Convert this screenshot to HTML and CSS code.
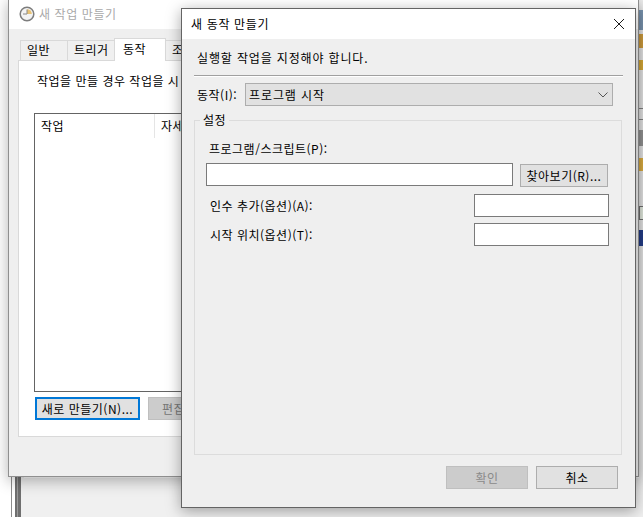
FILE: index.html
```html
<!DOCTYPE html>
<html lang="ko">
<head>
<meta charset="utf-8">
<title>새 동작 만들기</title>
<link rel="stylesheet" href="styles.css">
</head>
<body>
<div class="desktop">
  <div class="bg-left"></div>
  <div class="bg-right">
    <div class="strip-blue"></div>
    <div class="strip-ico strip-a"></div>
    <div class="strip-ico strip-b"></div>
    <div class="strip-line strip-c"></div>
    <div class="strip-coil"></div>
    <div class="strip-ico strip-d"></div>
    <div class="strip-box"></div>
    <div class="strip-navy"></div>
  </div>
  <div class="bg-window"></div>

  <section class="window back">
    <header class="titlebar back-title">
      <svg class="clock" width="16" height="16" viewBox="0 0 16 16" aria-hidden="true">
        <circle cx="8" cy="8" r="6.8" fill="#f3f3f3" stroke="#7d7d7d" stroke-width="1.5"/>
        <path d="M8 3.2V8H12.8A4.8 4.8 0 0 0 8 3.2Z" fill="#e8c274"/>
        <path d="M8 3.5V8H4" fill="none" stroke="#8a8a8a" stroke-width="1"/>
      </svg>
      <span class="back-name">새 작업 만들기</span>
    </header>
    <div class="back-body">
      <nav class="tabs">
        <span class="tab tab-general">일반</span>
        <span class="tab tab-trigger">트리거</span>
        <span class="tab tab-active">동작</span>
        <span class="tab tab-cond">조</span>
      </nav>
      <div class="panel">
        <p class="panel-text">작업을 만들 경우 작업을 시</p>
        <div class="listbox">
          <div class="list-head">
            <span class="col col-action">작업</span>
            <span class="col col-detail">자세</span>
          </div>
        </div>
        <div class="panel-actions">
          <button class="btn btn-new">새로 만들기(N)...</button>
          <button class="btn btn-edit">편집</button>
        </div>
      </div>
    </div>
  </section>

  <section class="window dialog">
    <header class="titlebar dialog-title">
      <span>새 동작 만들기</span>
      <svg class="close" width="10" height="10" viewBox="0 0 10 10" aria-hidden="true">
        <path d="M0 0L10 10M10 0L0 10" stroke="#1a1a1a" stroke-width="1" fill="none"/>
      </svg>
    </header>
    <div class="dialog-body">
      <p class="intro">실행할 작업을 지정해야 합니다.</p>
      <div class="rule"></div>
      <div class="action-row">
        <span class="action-label">동작(I):</span>
        <div class="select">
          <span>프로그램 시작</span>
          <svg width="10" height="6" viewBox="0 0 10 6" aria-hidden="true">
            <path d="M0.5 0.5L5 5L9.500 0.5" stroke="#555" stroke-width="1" fill="none"/>
          </svg>
        </div>
      </div>
      <div class="group">
        <span class="legend">설정</span>
        <label class="prog-label">프로그램/스크립트(P):</label>
        <div class="prog-row">
          <div class="input prog-input"></div>
          <button class="btn btn-browse">찾아보기(R)...</button>
        </div>
        <div class="opt-row opt-args">
          <label>인수 추가(옵션)(A):</label>
          <div class="input opt-input"></div>
        </div>
        <div class="opt-row opt-start">
          <label>시작 위치(옵션)(T):</label>
          <div class="input opt-input"></div>
        </div>
      </div>
      <div class="dialog-actions">
        <button class="btn btn-ok">확인</button>
        <button class="btn btn-cancel">취소</button>
      </div>
    </div>
  </section>
</div>
</body>
</html>
```
FILE: styles.css
```css
* { box-sizing: border-box; }
html, body { margin: 0; padding: 0; }
body {
  width: 643px;
  height: 517px;
  overflow: hidden;
  background: #fff;
  font-family: "Noto Sans CJK KR", "Open Sans", sans-serif;
  font-size: 12px;
  letter-spacing: .5px;
  color: #000;
}
.desktop { position: relative; width: 643px; height: 517px; overflow: hidden; }
p { margin: 0; }
button { font: inherit; letter-spacing: inherit; padding: 0; margin: 0; }
span, label { line-height: 16px; }

/* backdrop */
.bg-left {
  position: absolute; left: 0; top: 0; width: 24px; height: 517px;
  background: linear-gradient(90deg, #fff 0 11px, #8c8c8c 11px 12px, #fff 12px 15px, #6f6f6f 15px 17px, #9a9a9a 17px 18px, #6f6f6f 18px 21px, #f0f0f0 21px);
}
.bg-window {
  position: absolute; left: 21px; top: 478px; width: 622px; height: 39px; background: #f0f0f0;
}
.bg-right {
  position: absolute; left: 639px; top: 0; width: 4px; height: 517px; background: #f0f0f0;
}
.bg-right > div { position: absolute; left: 0; width: 4px; }
.strip-blue { top: 10px; height: 20px; background: #7f9bb8; }
.strip-a { top: 34px; height: 14px; background: #d9a441; }
.strip-b { top: 60px; height: 10px; background: #e2b23a; }
.strip-line { top: 108px; height: 12px; border-top: 1px solid #888; border-bottom: 1px solid #888; }
.strip-coil { top: 130px; height: 16px; background: #9a9a9a; }
.strip-d { top: 158px; height: 13px; background: #e6b545; }
.strip-box { top: 206px; height: 14px; border: 1px solid #777; border-right: 0; background: #eef5ea; }
.strip-navy { top: 230px; height: 16px; background: #26408f; }

/* windows */
.window { position: absolute; background: #efefef; }
.titlebar { background: #fff; display: flex; align-items: center; }

.back {
  left: 8px; top: -2px; width: 631px; height: 479px;
  border: 1px solid #8f8f8f;
  box-shadow: 0 4px 14px rgba(0, 0, 0, .3);
}
.back-title { height: 30px; padding-left: 10px; gap: 4px; }
.clock { flex: none; }
.back-name { color: #a9a9a9; letter-spacing: .6px; }
.back-body { padding: 9px 0 0 9px; }
.tabs { display: flex; height: 22px; align-items: flex-end; padding-left: 2px; position: relative; }
.tab {
  height: 20px; background: #f0f0f0; border: 1px solid #d9d9d9; border-bottom: 0;
  padding: 1px 0 0 6px; margin-left: -1px;
}
.tab-general { width: 48px; margin-left: 0; }
.tab-trigger { width: 48px; }
.tab-active {
  width: 52px; height: 23px; background: #fff; margin-bottom: -1px; padding: 2px 0 0 8px;
  position: relative;
}
.tab-cond { width: 60px; }
.panel {
  width: 606px; height: 377px; background: #fff; border: 1px solid #d9d9d9;
  padding: 12px 0 0 15px; white-space: nowrap;
}
.panel-text { line-height: 16px; padding-left: 3px; }
.listbox { width: 560px; height: 279px; margin-top: 24px; border: 1px solid #646464; background: #fff; }
.list-head { display: flex; height: 24px; }
.col { padding: 4px 0 0 6px; height: 24px; }
.col-action { width: 120px; border-right: 1px solid #e5e5e5; }
.panel-actions { display: flex; gap: 8px; margin-top: 5px; padding-left: 1px; }
.btn { height: 23px; background: #e1e1e1; border: 1px solid #adadad; color: #000; line-height: 16px; white-space: nowrap; }
.btn-new { width: 105px; border: 2px solid #0078d7; }
.btn-edit { width: 100px; background: #cccccc; border-color: #bfbfbf; color: #777; text-align: left; padding-left: 13px; }

.dialog {
  left: 181px; top: 8px; width: 455px; height: 500px;
  border: 1px solid #646464;
  box-shadow: 0 3px 14px rgba(0, 0, 0, .35);
}
.dialog-title { height: 30px; padding: 0 11px 0 9px; justify-content: space-between; letter-spacing: .65px; }
.dialog-body { padding: 0 13px 0 12px; }
.intro { padding: 11px 0 0 3px; line-height: 16px; letter-spacing: .85px; }
.rule { height: 2px; margin-top: 9px; margin-right: -1px; background: #a0a0a0; border-bottom: 1px solid #fff; }
.action-row { display: flex; align-items: center; margin-top: 6px; padding-left: 3px; }
.action-label { width: 48px; }
.select {
  width: 368px; height: 23px; background: #e1e1e1; border: 1px solid #adadad;
  display: flex; align-items: center; justify-content: space-between; padding: 0 4px 0 3px;
  letter-spacing: .9px;
}
.group {
  position: relative; width: 428px; height: 335px; margin-top: 14px;
  border: 1px solid #dcdcdc; padding: 20px 0 0 11px;
}
.legend { position: absolute; left: 5px; top: -9px; background: #efefef; padding: 0 3px; }
.prog-label { display: block; padding-left: 3px; }
.prog-row { display: flex; gap: 7px; margin-top: 6px; }
.input { background: #fff; border: 1px solid #7a7a7a; height: 23px; }
.prog-input { width: 307px; }
.btn-browse { width: 88px; margin-top: 1px; }
.opt-row { display: flex; justify-content: space-between; align-items: center; width: 403px; }
.opt-row label { padding: 1px 0 0 4px; }
.opt-args { margin-top: 7px; }
.opt-start { margin-top: 6px; }
.opt-input { width: 135px; }
.dialog-actions { display: flex; gap: 8px; justify-content: flex-end; margin: 11px 4px 0 0; }
.btn-ok, .btn-cancel { width: 82px; }
.btn-ok { background: #cccccc; border-color: #bfbfbf; color: #8a8a8a; }
```
